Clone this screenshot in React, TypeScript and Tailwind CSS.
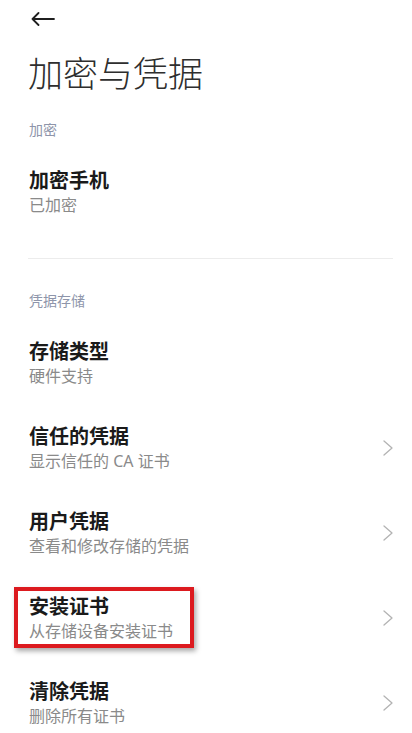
import React from 'react'

type Item = {
  title: string
  subtitle: string
  arrow?: boolean
  marked?: boolean
}

const storageItems: Item[] = [
  { title: '存储类型', subtitle: '硬件支持' },
  { title: '信任的凭据', subtitle: '显示信任的 CA 证书', arrow: true },
  { title: '用户凭据', subtitle: '查看和修改存储的凭据', arrow: true },
  { title: '安装证书', subtitle: '从存储设备安装证书', arrow: true, marked: true },
  { title: '清除凭据', subtitle: '删除所有证书', arrow: true },
]

function BackArrow() {
  return (
    <svg width="24" height="14" viewBox="0 0 24 14" fill="none">
      <path
        d="M23 7H1.5M7.5 1L1.5 7L7.5 13"
        stroke="#1f1f1f"
        strokeWidth="1.8"
        strokeLinecap="round"
        strokeLinejoin="round"
      />
    </svg>
  )
}

function Chevron() {
  return (
    <svg width="10" height="16" viewBox="0 0 10 16" fill="none">
      <path d="M1 1L9 8L1 15" stroke="#b3b3b3" strokeWidth="1.3" strokeLinecap="round" strokeLinejoin="round" />
    </svg>
  )
}

function Row({ item }: { item: Item }) {
  return (
    <div className="flex items-center justify-between">
      <div className="relative">
        <div className="text-[20px] leading-[24px] font-bold text-[#1a1a1a]">{item.title}</div>
        <div className="text-[16px] leading-[24px] text-[#8a8a8a]">{item.subtitle}</div>
        {/* annotation box */}
        {item.marked && (
          <div className="absolute left-[-15px] top-[-8px] w-[180px] h-[61px] border-[4px] border-[#dc1a1f] shadow-[2px_3px_5px_rgba(0,0,0,0.35)]" />
        )}
      </div>
      {item.arrow && (
        <div className="-mt-[3px]">
          <Chevron />
        </div>
      )}
    </div>
  )
}

function SectionHeader({ label }: { label: string }) {
  return <div className="text-[14px] leading-[20px] text-[#8e95aa]">{label}</div>
}

export default function App() {
  return (
    <div
      className="w-[412px] h-[733px] overflow-hidden bg-white"
      style={{ fontFamily: '"Noto Sans", "Noto Sans CJK SC", sans-serif' }}
    >
      <div className="h-[38px] flex items-center pl-[31px]">
        <BackArrow />
      </div>

      <div className="pl-[28px] pr-[19px]">
        <h1 className="mt-[13px] text-[35px] leading-[46px] font-light text-[#2e2e2e]">加密与凭据</h1>

        <div className="pt-[23px] pl-[1px]">
          <SectionHeader label="加密" />
        </div>
        <div className="mt-[29px] pl-[1px]">
          <Row item={{ title: '加密手机', subtitle: '已加密' }} />
        </div>

        <div className="mt-[41px] h-px bg-[#ececec]" />

        <div className="mt-[32px] pl-[1px]">
          <SectionHeader label="凭据存储" />
        </div>

        <div className="mt-[29px] pl-[1px] flex flex-col gap-[37px]">
          {storageItems.map((item) => (
            <Row key={item.title} item={item} />
          ))}
        </div>
      </div>
    </div>
  )
}
